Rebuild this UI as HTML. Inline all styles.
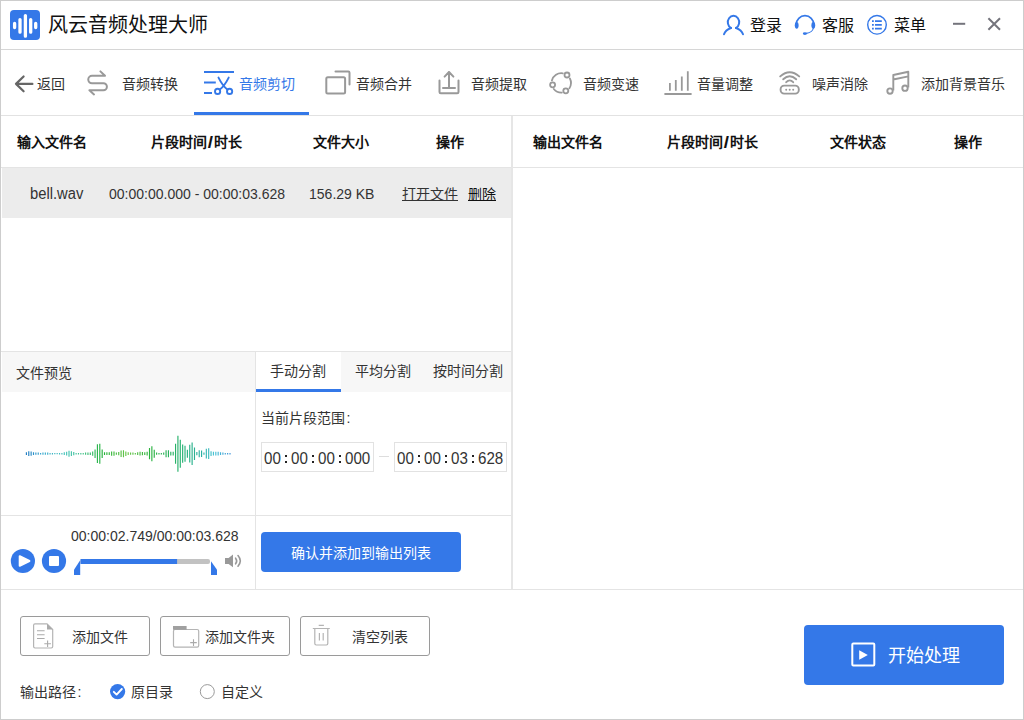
<!DOCTYPE html>
<html lang="zh-CN">
<head>
<meta charset="utf-8">
<title>风云音频处理大师</title>
<style>
*{box-sizing:border-box;margin:0;padding:0}
html,body{width:1024px;height:720px;overflow:hidden;background:#fff}
body{font-family:"Liberation Sans",sans-serif;font-size:14px;color:#333;position:relative}
.a{position:absolute}
.t{position:absolute;white-space:nowrap;line-height:20px;height:20px}
.hl{position:absolute;height:1px;background:#e4e4e4}
.vl{position:absolute;width:1px;background:#e4e4e4}
.b{font-weight:bold;color:#111}
.blue{color:#3478e8}
.u{text-decoration:underline;text-underline-offset:1px}
.btn{position:absolute;border:1px solid #9a9a9a;border-radius:3px;background:#fff}
.tm{position:absolute;white-space:nowrap;font-size:16px;transform:scaleX(.945);transform-origin:0 50%;line-height:20px;height:20px;color:#333}
.lat{font-size:15.5px;transform:scaleX(.904);transform-origin:0 50%}
.cl{position:absolute;width:2px;height:2px;background:#222}
#ov{position:absolute;left:0;top:0;overflow:visible}
</style>
</head>
<body>
<!-- title bar -->
<div class="a" style="left:10px;top:10px;width:30px;height:30px;border-radius:4px;background:#3478e8"></div>
<div class="t" style="left:48px;top:13px;font-size:20px;line-height:24px;height:24px;color:#111">风云音频处理大师</div>
<div class="t" style="left:750px;top:16px;font-size:16px;color:#111">登录</div>
<div class="t" style="left:822px;top:16px;font-size:16px;color:#111">客服</div>
<div class="t" style="left:894px;top:16px;font-size:16px;color:#111">菜单</div>
<div class="hl" style="left:1px;top:49px;width:1022px;background:#d6d6d6"></div>

<!-- nav -->
<div class="t" style="left:37px;top:74px">返回</div>
<div class="t" style="left:122px;top:74px">音频转换</div>
<div class="t blue" style="left:239px;top:74px">音频剪切</div>
<div class="t" style="left:356px;top:74px">音频合并</div>
<div class="t" style="left:471px;top:74px">音频提取</div>
<div class="t" style="left:583px;top:74px">音频变速</div>
<div class="t" style="left:697px;top:74px">音量调整</div>
<div class="t" style="left:812px;top:74px">噪声消除</div>
<div class="t" style="left:921px;top:74px">添加背景音乐</div>
<div class="hl" style="left:1px;top:115px;width:1022px;background:#e2e2e2"></div>
<div class="a" style="left:194px;top:112px;width:115px;height:3px;background:#3478e8"></div>

<!-- left table -->
<div class="t b" style="left:17px;top:132px">输入文件名</div>
<div class="t b" style="left:151px;top:132px">片段时间<span style="display:inline-block;width:6.8px;text-align:center;transform:scale(1.35,1.12)">/</span>时长</div>
<div class="t b" style="left:313px;top:132px">文件大小</div>
<div class="t b" style="left:436px;top:132px">操作</div>
<div class="hl" style="left:1px;top:167px;width:510px"></div>
<div class="a" style="left:2px;top:168px;width:509px;height:50px;background:#ececec"></div>
<div class="t" style="left:30px;top:184px;font-size:16px;transform:scaleX(.922);transform-origin:0 50%">bell.wav</div>
<div class="t lat" style="left:109px;top:184px">00:00:00.000 - 00:00:03.628</div>
<div class="t lat" style="left:309px;top:184px">156.29 KB</div>
<div class="t u" style="left:402px;top:184px">打开文件</div>
<div class="t u" style="left:468px;top:184px;color:#111">删除</div>

<!-- right table -->
<div class="vl" style="left:511px;top:116px;width:2px;height:473px;background:#e6e6e6"></div>
<div class="t b" style="left:533px;top:132px">输出文件名</div>
<div class="t b" style="left:667px;top:132px">片段时间<span style="display:inline-block;width:6.8px;text-align:center;transform:scale(1.35,1.12)">/</span>时长</div>
<div class="t b" style="left:830px;top:132px">文件状态</div>
<div class="t b" style="left:954px;top:132px">操作</div>
<div class="hl" style="left:513px;top:167px;width:510px"></div>

<!-- preview -->
<div class="hl" style="left:1px;top:351px;width:510px"></div>
<div class="a" style="left:2px;top:352px;width:509px;height:40px;background:#f7f7f7"></div>
<div class="a" style="left:256px;top:352px;width:85px;height:40px;background:#fff"></div>
<div class="a" style="left:256px;top:389px;width:85px;height:3px;background:#3478e8"></div>
<div class="vl" style="left:255px;top:352px;height:237px"></div>
<div class="t" style="left:16px;top:363px">文件预览</div>
<div class="t" style="left:270px;top:361px">手动分割</div>
<div class="t" style="left:355px;top:361px">平均分割</div>
<div class="t" style="left:433px;top:361px">按时间分割</div>
<div class="t" style="left:261px;top:408px">当前片段范围<span style="margin-left:1.5px">:</span></div>

<div class="a" style="left:261px;top:442px;width:113px;height:30px;border:1px solid #e2e2e2;background:#fff"></div>
<div class="a" style="left:394px;top:442px;width:113px;height:30px;border:1px solid #e2e2e2;background:#fff"></div>
<div class="a" style="left:379px;top:456px;width:10px;height:1px;background:#ddd"></div>
<div class="tm" style="left:264px;top:449px">00</div><div class="tm" style="left:291.3px;top:449px">00</div><div class="tm" style="left:318.3px;top:449px">00</div><div class="tm" style="left:345.3px;top:449px">000</div>
<div class="tm" style="left:397px;top:449px">00</div><div class="tm" style="left:424.3px;top:449px">00</div><div class="tm" style="left:451.3px;top:449px">03</div><div class="tm" style="left:478.3px;top:449px">628</div>

<div class="cl" style="left:285.2px;top:455px"></div><div class="cl" style="left:285.2px;top:461px"></div><div class="cl" style="left:312.3px;top:455px"></div><div class="cl" style="left:312.3px;top:461px"></div><div class="cl" style="left:339.3px;top:455px"></div><div class="cl" style="left:339.3px;top:461px"></div><div class="cl" style="left:418.2px;top:455px"></div><div class="cl" style="left:418.2px;top:461px"></div><div class="cl" style="left:445.3px;top:455px"></div><div class="cl" style="left:445.3px;top:461px"></div><div class="cl" style="left:472.3px;top:455px"></div><div class="cl" style="left:472.3px;top:461px"></div>
<div class="hl" style="left:1px;top:515px;width:510px"></div>
<div class="t lat" style="left:71px;top:526px">00:00:02.749/00:00:03.628</div>
<div class="a" style="left:261px;top:532px;width:200px;height:40px;border-radius:4px;background:#3478e8"></div>
<div class="t" style="left:291px;top:543px;color:#fff">确认并添加到输出列表</div>

<!-- bottom -->
<div class="hl" style="left:1px;top:589px;width:1022px"></div>
<div class="btn" style="left:20px;top:616px;width:130px;height:40px"></div>
<div class="btn" style="left:160px;top:616px;width:130px;height:40px"></div>
<div class="btn" style="left:300px;top:616px;width:130px;height:40px"></div>
<div class="t" style="left:72px;top:627px">添加文件</div>
<div class="t" style="left:205px;top:627px">添加文件夹</div>
<div class="t" style="left:352px;top:627px">清空列表</div>
<div class="t" style="left:20px;top:682px">输出路径<span style="margin-left:1.5px">:</span></div>
<div class="t" style="left:131px;top:682px">原目录</div>
<div class="t" style="left:221px;top:682px">自定义</div>
<div class="a" style="left:804px;top:625px;width:200px;height:60px;border-radius:4px;background:#3478e8"></div>
<div class="t" style="left:888px;top:644px;font-size:18px;line-height:24px;height:24px;color:#fff">开始处理</div>

<!-- window frame -->
<div class="a" style="left:0;top:0;width:1024px;height:720px;border:1px solid #cdcdcd"></div>

<svg id="ov" width="1024" height="720" viewBox="0 0 1024 720" fill="none">
<!-- logo bars -->
<g stroke="#fff" stroke-width="3.3" stroke-linecap="round"><path d="M14.6 23.5v4M20 19.6v12.6M25.4 15.6v20.6M30.7 19.6v12.6M35.7 23.5v4"/></g>
<!-- user -->
<g stroke="#3478e8" stroke-width="2" stroke-linecap="round"><path d="M731 28A5.7 6.4 0 1 1 736 28"/><path d="M724 34.3Q725.5 29.8 731 28M736 28Q741.5 29.8 743 34.3"/></g>
<!-- headset -->
<g stroke="#3478e8" stroke-width="1.7" stroke-linecap="round"><path d="M796.2 24.5A8.8 8.8 0 0 1 813.8 24.5"/><path d="M813.6 27.5Q812.5 32.5 806.5 33.4" stroke-width="1.1"/></g>
<g fill="#3478e8"><ellipse cx="796.7" cy="25.3" rx="1.9" ry="3.4"/><ellipse cx="813.3" cy="25.3" rx="1.9" ry="3.4"/><ellipse cx="804.9" cy="33.6" rx="2.1" ry="1.4"/></g>
<!-- menu -->
<circle cx="877" cy="24.8" r="9.3" stroke="#3478e8" stroke-width="1.4"/>
<g stroke="#3478e8" stroke-width="1.8"><path d="M872 21.2h1.8M875 21.2h6.8M872 24.8h1.8M875 24.8h6.8M872 28.6h1.8M875 28.6h6.8"/></g>
<!-- min / close -->
<g stroke="#74747c" stroke-width="2"><path d="M953 23.8h12.2"/><path d="M988.4 18.2l11.6 11.6M1000 18.2l-11.6 11.6"/></g>
<!-- back arrow -->
<g stroke="#666" stroke-width="2.2" stroke-linecap="round" stroke-linejoin="round"><path d="M32.4 83.9H16M23.6 76.5L16 83.9L23.6 91.3"/></g>
<!-- convert -->
<g stroke="#999" stroke-width="2" stroke-linecap="round" stroke-linejoin="round"><path d="M100.4 71.4L105 75.8H92A3.75 3.75 0 0 0 92 83.3H103.4A3.5 3.5 0 0 1 103.4 90.3H89.4L94 94.4"/></g>
<!-- scissors -->
<g stroke="#3478e8" stroke-width="2"><path d="M204 72h30M204 82.5h11.8M204 93h8"/><path d="M218.5 77.6Q222.6 85.8 227.4 89.6M228.7 77.6Q224.6 85.8 219.8 89.6" stroke-linecap="round" stroke-width="1.9"/><circle cx="217.6" cy="91.4" r="2.6" stroke-width="1.9"/><circle cx="229.6" cy="91.4" r="2.6" stroke-width="1.9"/></g>
<!-- merge -->
<g stroke="#999" stroke-width="2" stroke-linejoin="round"><rect x="326.3" y="77.2" width="18.8" height="16.4" rx="1.5"/><path d="M335.5 71.5H348.3Q349.5 71.5 349.5 72.7V84.5" stroke-linecap="round"/></g>
<!-- extract -->
<g stroke="#999" stroke-width="2" stroke-linecap="round" stroke-linejoin="round"><path d="M439.5 80.5V92Q439.5 93.3 440.8 93.3H457.2Q458.5 93.3 458.5 92V80.5"/><path d="M449 72V88M444.6 76.6L449 72L453.4 76.6M443 88h12"/></g>
<!-- speed -->
<g stroke="#999" stroke-width="1.8"><path d="M551.9 80.4A9.7 9.7 0 0 1 562.8 73.3M569.9 78.5A9.7 9.7 0 0 1 569.4 88.2M561.8 92.6A9.7 9.7 0 0 1 553.8 89.0" stroke-linecap="round"/><circle cx="567" cy="75" r="2.5"/><circle cx="552.6" cy="84.8" r="2.5"/><circle cx="565.8" cy="90.8" r="2.5"/></g>
<!-- volume bars -->
<g stroke="#999" stroke-width="1.8"><path d="M669.9 83V90.7M675.8 80.1V90.7M681.8 76.5V90.7M687.8 71.3V90.7"/><path d="M664.4 94h27.2" stroke-width="2"/></g>
<!-- noise -->
<g stroke="#999" stroke-width="1.9" stroke-linecap="round"><path d="M780.2 76.4Q789.7 68 799.2 76.4M783.2 79.3Q789.7 73.3 796.2 79.3M786.2 82.2Q789.7 78.6 793.2 82.2"/><rect x="780.6" y="85.6" width="18.2" height="8" rx="3.6"/></g>
<g fill="#999"><circle cx="786.2" cy="89.7" r="1"/><circle cx="789.7" cy="89.7" r="1"/><circle cx="793.2" cy="89.7" r="1"/></g>
<!-- music -->
<g stroke="#999" stroke-width="1.9" stroke-linejoin="round"><circle cx="890" cy="91.1" r="2.7"/><circle cx="905" cy="88.2" r="2.7"/><path d="M893.3 90.5V75L908.3 71.7V87.6M893.3 79.5L908.3 76.4"/></g>
<!-- play / stop -->
<circle cx="22.9" cy="561" r="12.1" fill="#3478e8"/><path d="M19.7 556.2V565.8L29.4 561Z" fill="#fff" stroke="#fff" stroke-width="2" stroke-linejoin="round"/>
<circle cx="54" cy="561" r="12.1" fill="#3478e8"/><rect x="49" y="556" width="10" height="10" rx="1" fill="#fff"/>
<!-- slider -->
<rect x="80.5" y="559" width="129.5" height="5" rx="2" fill="#c2c2c2"/><rect x="80.5" y="559" width="96.6" height="5" fill="#3478e8"/>
<path d="M74 575V569.8L80.2 560.2V575Z" fill="#3478e8"/><path d="M211 575V561.3L217 569.8V575Z" fill="#3478e8"/>
<!-- speaker -->
<g fill="#999"><path d="M225 558H228.6L233 554.5V567.3L228.6 564H225Z"/></g>
<g stroke="#999" stroke-width="1.6" stroke-linecap="round"><path d="M235.6 558.2Q237.8 561 235.6 563.8M238 555.6Q242.6 561 238 566.2"/></g>
<!-- file icon -->
<g stroke="#b4b4b4" stroke-width="1.2"><path d="M35 623.8H47L52.7 629.5V646.6Q52.7 648 51.3 648H35Q33.6 648 33.6 646.6V625.2Q33.6 623.8 35 623.8Z"/></g>
<path d="M47 623.8L52.7 629.5H47Z" fill="#aaa"/>
<g stroke="#aaa" stroke-width="1.1"><path d="M37 630.8h7.6M37 634.7h7.6M37 638.5h7.6M44.3 643.7h6.6M47.6 640.4v6.6"/></g>
<!-- folder icon -->
<g stroke="#b4b4b4" stroke-width="1.2"><rect x="173.5" y="629.5" width="25.2" height="17.6" rx="1.6"/></g>
<path d="M173 626H186.6V629.8H173Z" fill="#a0a0a0"/>
<g stroke="#aaa" stroke-width="1.1"><path d="M190.2 642.6h6.6M193.5 639.3v6.6"/></g>
<!-- trash -->
<g stroke="#b4b4b4" stroke-width="1.2"><path d="M312.8 628.5H329.8M318.7 625.4h5.2M314.8 628.5V643.6Q314.8 645 316.2 645H326.4Q327.8 645 327.8 643.6V628.5M319.4 633v7.6M323.2 633v7.6"/></g>
<!-- radios -->
<circle cx="117.6" cy="691.6" r="7.6" fill="#3478e8"/><path d="M113.8 691.8L116.6 694.6L121.8 689" stroke="#fff" stroke-width="1.9" stroke-linecap="round" stroke-linejoin="round"/>
<circle cx="207.3" cy="691.6" r="7" fill="#fff" stroke="#9a9a9a" stroke-width="1"/>
<!-- start icon -->
<rect x="852.3" y="643.6" width="22" height="22" rx="1" stroke="#fff" stroke-width="2"/><path d="M859.2 650.2V659.8L867.8 655Z" fill="#fff"/>
<!-- waveform -->
<defs><linearGradient id="wg" gradientUnits="userSpaceOnUse" x1="25" y1="0" x2="231" y2="0"><stop offset="0" stop-color="#1f78c0"/><stop offset="0.08" stop-color="#35a6d0"/><stop offset="0.2" stop-color="#45c4b8"/><stop offset="0.3" stop-color="#3fbf7a"/><stop offset="0.38" stop-color="#22b138"/><stop offset="0.5" stop-color="#6cc64a"/><stop offset="0.6" stop-color="#2bb23c"/><stop offset="0.75" stop-color="#27b26e"/><stop offset="0.86" stop-color="#2ab0a4"/><stop offset="0.92" stop-color="#49c4d6"/><stop offset="1" stop-color="#3a90d8"/></linearGradient></defs>
<path d="M26.40 452.35V455.05M28.77 451.30V456.10M31.13 451.55V455.85M33.50 452.35V455.05M35.87 452.60V454.80M38.24 452.60V454.80M40.60 452.90V454.50M42.97 452.60V454.80M45.34 452.60V454.80M47.71 452.60V454.80M50.07 452.90V454.50M52.44 452.90V454.50M54.81 453.05V454.35M57.18 453.05V454.35M59.54 452.90V454.50M61.91 452.90V454.50M64.28 452.35V455.05M66.65 451.80V455.60M69.01 450.70V456.70M71.38 451.30V456.10M73.75 452.10V455.30M76.12 452.90V454.50M78.48 452.90V454.50M80.85 452.90V454.50M83.22 452.90V454.50M85.59 452.60V454.80M87.95 452.50V454.90M90.32 452.50V454.90M92.69 451.55V455.85M95.06 449.40V458.00M97.42 444.30V463.10M99.79 443.75V463.65M102.16 449.40V458.00M104.53 452.35V455.05M106.89 452.35V455.05M109.26 452.35V455.05M111.63 451.55V455.85M114.00 451.55V455.85M116.36 452.60V454.80M118.73 452.10V455.30M121.10 450.50V456.90M123.47 450.20V457.20M125.83 451.40V456.00M128.20 452.35V455.05M130.57 452.60V454.80M132.93 452.60V454.80M135.30 452.90V454.50M137.67 452.35V455.05M140.04 451.80V455.60M142.40 452.10V455.30M144.77 452.35V455.05M147.14 451.80V455.60M149.51 448.05V459.35M151.87 446.20V461.20M154.24 449.70V457.70M156.61 452.60V454.80M158.98 452.90V454.50M161.34 452.90V454.50M163.71 452.60V454.80M166.08 450.20V457.20M168.45 450.20V457.20M170.81 451.80V455.60M173.18 451.80V455.60M175.55 443.75V463.65M177.92 435.70V471.70M180.28 439.70V467.70M182.65 444.55V462.85M185.02 445.70V461.70M187.39 449.70V457.70M189.75 444.85V462.55M192.12 442.45V464.95M194.49 447.50V459.90M196.86 452.10V455.30M199.22 450.20V457.20M201.59 450.50V456.90M203.96 452.60V454.80M206.33 448.85V458.55M208.69 448.35V459.05M211.06 451.30V456.10M213.43 451.80V455.60M215.80 451.80V455.60M218.16 451.80V455.60M220.53 452.35V455.05M222.90 452.60V454.80M225.27 452.90V454.50M227.63 452.90V454.50M230.00 452.90V454.50" stroke="url(#wg)" stroke-width="1.15"/>
</svg>
</body>
</html>
